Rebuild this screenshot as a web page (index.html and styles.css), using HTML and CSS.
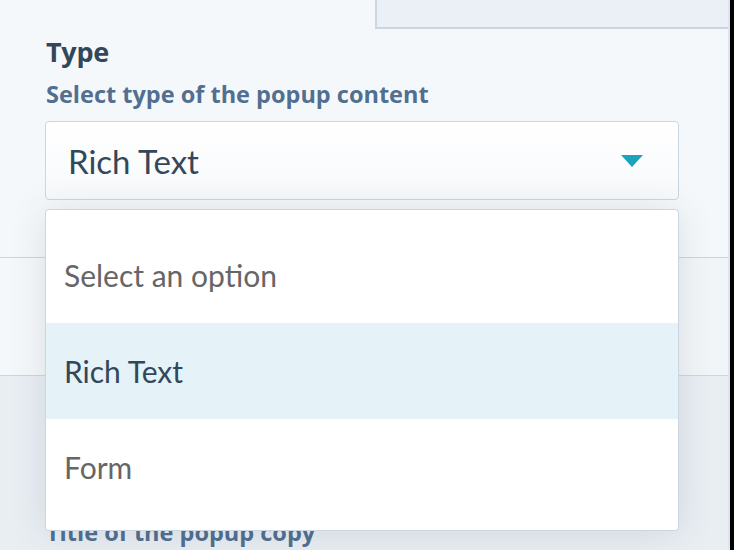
FILE: index.html
```html
<!DOCTYPE html>
<html>
<head>
<meta charset="utf-8">
<link rel="stylesheet" href="styles.css">
</head>
<body>
<div class="frame">
  <div class="main">
    <section class="top">
      <div class="topbar-row"><div class="topbar"></div></div>
      <div class="field">
        <h2 class="label">Type</h2>
        <p class="help">Select type of the popup content</p>
        <div class="select-wrap">
          <div class="select">
            <span class="select-value">Rich Text</span>
            <svg class="caret" width="22" height="12" viewBox="0 0 22 12"><path d="M0 0 H22 L11 12 Z" fill="#1aa3bb"/></svg>
          </div>
          <ul class="menu">
            <li class="option muted">Select an option</li>
            <li class="option active">Rich Text</li>
            <li class="option muted">Form</li>
          </ul>
        </div>
      </div>
    </section>
    <section class="middle"></section>
    <section class="bottom">
      <p class="help title-help">Title of the popup copy</p>
    </section>
  </div>
  <div class="edge"></div>
</div>
</body>
</html>
```
FILE: styles.css
```css
html, body {
  margin: 0;
  padding: 0;
}
body {
  width: 734px;
  height: 550px;
  overflow: hidden;
  background: #f5f8fa;
  font-family: "Lato", "Open Sans", sans-serif;
}
.frame {
  display: flex;
  height: 550px;
}
.main {
  flex: 1;
  display: flex;
  flex-direction: column;
  border-right: 2px solid #dfe5ec;
}
.edge {
  width: 4px;
  background: #000;
}
.top {
  height: 257px;
  background: #f5f8fa;
  border-bottom: 1px solid #cbd6e2;
  position: relative;
  z-index: 2;
}
.topbar-row {
  display: flex;
  justify-content: flex-end;
}
.topbar {
  width: 351px;
  height: 27px;
  background: #eaf0f6;
  border-left: 2px solid #cbd6e2;
  border-bottom: 2px solid #cbd6e2;
}
.field {
  padding: 6px 49px 0 45px;
}
.label {
  margin: 0 0 0 1px;
  font-family: "Open Sans", sans-serif;
  font-weight: 700;
  font-size: 27px;
  line-height: 34px;
  color: #33475b;
  letter-spacing: -0.3px;
}
.help {
  margin: 10px 0 0 1px;
  font-family: "Open Sans", sans-serif;
  font-weight: 700;
  font-size: 23.5px;
  line-height: 30px;
  color: #516f90;
}
.select-wrap {
  position: relative;
  margin-top: 12px;
}
.select {
  height: 77px;
  border: 1px solid #cbd6e2;
  border-radius: 4px;
  background: linear-gradient(#ffffff, #f7f9fb);
  display: flex;
  align-items: center;
  justify-content: space-between;
  padding: 0 35px 0 22px;
}
.select-value {
  font-size: 33px;
  color: #33475b;
}
.caret {
  display: block;
}
.menu {
  position: absolute;
  left: 0;
  right: 0;
  top: 88px;
  margin: 0;
  padding: 17px 0 15px;
  list-style: none;
  background: #fff;
  border: 1px solid #cbd6e2;
  border-radius: 4px;
  box-shadow: 0 2px 36px rgba(45, 62, 80, 0.13);
}
.option {
  height: 96px;
  display: flex;
  align-items: center;
  padding-left: 18px;
  font-size: 30px;
  color: #33475b;
}
.option.muted {
  color: #666666;
}
.option.active {
  background: #e5f2f8;
}
.middle {
  height: 117px;
  background: linear-gradient(90deg, #f5f8fa, #f2f5f8);
  border-bottom: 1px solid #cbd6e2;
}
.bottom {
  flex: 1;
  background: #e9eef3;
  padding: 0 0 0 46px;
  display: flex;
  flex-direction: column;
  justify-content: flex-end;
}
.title-help {
  margin: 0 0 3px 0;
}
```
